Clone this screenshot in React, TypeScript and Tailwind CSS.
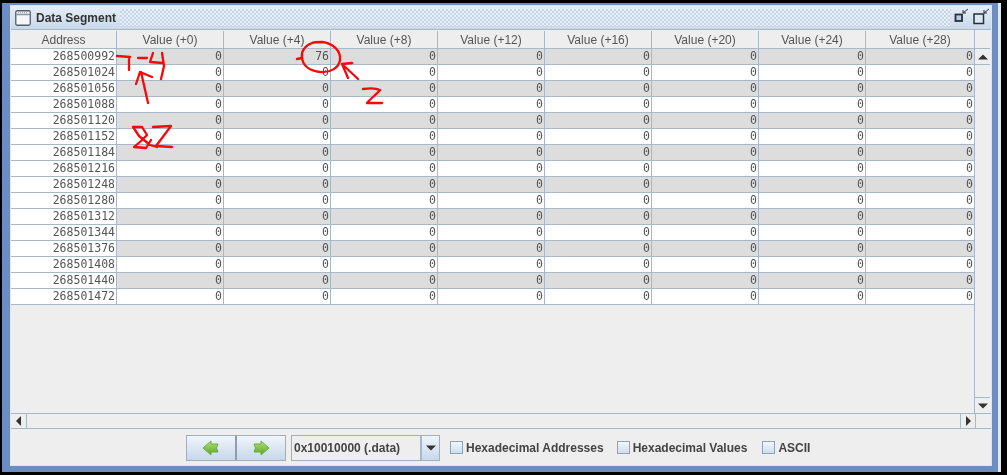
import React from 'react';

const ADDRESSES = [
	268500992, 268501024, 268501056, 268501088, 268501120, 268501152, 268501184, 268501216,
	268501248, 268501280, 268501312, 268501344, 268501376, 268501408, 268501440, 268501472,
];
const OFFSETS = [0, 4, 8, 12, 16, 20, 24, 28];
const COLS = 'grid grid-cols-[106px_repeat(7,107px)_108px]';

const ArrowIcon = ({ flip }: { flip?: boolean }) => (
	<svg width="18" height="16" viewBox="0 0 18 16" className={flip ? '-scale-x-100' : ''}>
		<defs>
			<linearGradient id="arrowFill" x1="0" y1="0" x2="0" y2="1">
				<stop offset="0" stopColor="#b4e07a" />
				<stop offset="1" stopColor="#5aa524" />
			</linearGradient>
		</defs>
		<path d="M1 8 L9 1 V4 H16 L14.5 8 L16 12 H9 V15 Z" fill="url(#arrowFill)" stroke="#6fae3c" strokeWidth="1" strokeLinejoin="round" />
	</svg>
);

const Triangle = ({ dir }: { dir: 'up' | 'down' | 'left' | 'right' }) => {
	const points = {
		up: '0,6 10,6 5,1',
		down: '0,1 10,1 5,6',
		left: '7,0 7,10 2,5',
		right: '3,0 3,10 8,5',
	}[dir];
	return (
		<svg width="10" height="10" viewBox={dir === 'up' || dir === 'down' ? '0 -1 10 9' : '0 0 10 10'}>
			<polygon points={points} fill="#333" />
		</svg>
	);
};

const ScrollButton = ({ dir, className }: { dir: 'up' | 'down' | 'left' | 'right'; className: string }) => (
	<div className={`flex shrink-0 items-center justify-center border-[#a8b8c6] bg-[#eeeeee] ${className}`}>
		<Triangle dir={dir} />
	</div>
);

const Checkbox = ({ label, className }: { label: string; className: string }) => (
	<div className={`flex items-center gap-[3px] ${className}`}>
		<div className="h-[13px] w-[13px] border border-[#8fa3b8] bg-gradient-to-b from-[#f2f6fa] to-[#cfdeed]" />
		<span className="text-[12px] font-bold text-[#444]">{label}</span>
	</div>
);

const Scribbles = () => (
	<svg
		className="pointer-events-none absolute top-0 left-0"
		width="1007"
		height="475"
		fill="none"
		stroke="#f80808"
		strokeWidth="2.3"
		strokeLinecap="round"
		strokeLinejoin="round"
	>
		<path d="M117 56 L130 57 M129 57 L129 70 M138 58 L147 58" />
		<path d="M153 53 L150 62 L163 63 M162 53 L164 66 L161 79" />
		<path d="M148 103 L141 72 M136 84 L140 72 L152 77" />
		<path d="M133 127 L142 127 L147 135 L141 141 L134 147 L146 148 L151 140 M133 127 L139 136 L150 145 L157 147" />
		<path d="M153 127 L171 126 L156 146 L172 147" />
		<path d="M312 43 C304 46 301 52 302 58 C303 66 310 71 320 72 C330 73 339 68 340 60 C341 50 332 43 322 42 C318 42 314 42 312 43" />
		<path d="M297 59 L302 58" />
		<path d="M342 64 L358 79 M342 64 L352 63 M342 64 L348 78" />
		<path d="M363 89 C370 88 376 88 380 90 C376 95 370 99 367 103 L382 103" />
	</svg>
);

export default function App() {
	return (
		<div className="relative flex h-[475px] w-[1007px] bg-black pt-[3px] pr-[6px] pb-[3px] pl-[2px] font-['Liberation_Sans',Arial,sans-serif] blur-[0.45px]">
			<div className="flex flex-1 flex-col border-r-[3px] border-[#e4e8ee] bg-[#6c8cc4] pt-[2px] pr-[6px] pb-[6px] pl-[8px]">
				<div className="flex flex-1 flex-col border border-[#dfe6ee] bg-[#eeeeee]">
					{/* title bar */}
					<div className="flex h-[23px] shrink-0 items-center bg-gradient-to-b from-[#e6eef7] to-[#c9d9ea] pr-[1px] pl-[4px]">
						<svg width="16" height="16" viewBox="0 0 16 16" className="shrink-0">
							<rect x="0.75" y="0.75" width="14.5" height="14.5" rx="1.5" fill="#f4f6f8" stroke="#55606c" strokeWidth="1.3" />
							<path d="M1 4.5 H15" stroke="#8a97a5" strokeWidth="1.5" />
							<path d="M3 2.7 H13" stroke="#8a97a5" strokeWidth="1" strokeDasharray="1 1" />
						</svg>
						<span className="ml-[5px] text-[12px] font-bold text-[#333]">Data Segment</span>
						<div className="mr-[3px] ml-[4px] h-[17px] flex-1 bg-[repeating-conic-gradient(#c3d4e6_0%_25%,#e9f0f7_0%_50%)] bg-[length:4px_4px]" />
						<svg width="36" height="20" viewBox="0 0 36 20" className="shrink-0">
							<rect x="1.5" y="6.5" width="6.5" height="6.5" fill="#b9cde2" stroke="#25303c" strokeWidth="1.8" />
							<path d="M9 5 L14 1 M9 5 H12 M9 5 V2" stroke="#25303c" strokeWidth="1" fill="none" />
							<rect x="20" y="6" width="9.5" height="9.5" fill="#dce7f2" stroke="#25303c" strokeWidth="1.5" />
							<path d="M30 5 L35 1 M30 5 H33 M30 5 V2" stroke="#25303c" strokeWidth="1" fill="none" />
						</svg>
					</div>

					{/* table and scrollbars */}
					<div className="flex flex-1 flex-col border-t border-b border-[#a8b8c6]">
						<div className="flex flex-1">
							<div className="w-[964px] shrink-0 border-r border-[#a8b8c6]">
								<div className={`${COLS} h-[19px] border-b border-[#a8b8c6] pt-[1px] text-[12px] text-[#555]`}>
									<div className="flex items-center justify-center border-r border-[#a8b8c6]">Address</div>
									{OFFSETS.map((o, i) => (
										<div key={o} className={`flex items-center justify-center ${i < 7 ? 'border-r border-[#a8b8c6]' : ''}`}>
											Value (+{o})
										</div>
									))}
								</div>
								{ADDRESSES.map((addr, r) => (
									<div
										key={addr}
										className={`${COLS} h-[16px] border-b border-[#a8b8c6] font-['DejaVu_Sans_Mono',monospace] text-[11.5px] leading-[15px] text-[#555]`}
									>
										<div className="border-r border-[#a8b8c6] bg-white pr-[1px] text-right">{addr}</div>
										{OFFSETS.map((o, c) => (
											<div
												key={o}
												className={`pr-[1px] text-right ${r % 2 === 0 ? 'bg-[#dddddd]' : 'bg-white'} ${c < 7 ? 'border-r border-[#a8b8c6]' : ''}`}
											>
												{r === 0 && o === 4 ? 76 : 0}
											</div>
										))}
									</div>
								))}
							</div>
							<div className="flex w-[15px] flex-col">
								<div className="h-[19px] shrink-0 border-b border-[#a8b8c6]" />
								<ScrollButton dir="up" className="h-[16px] border-b" />
								<div className="flex-1" />
								<ScrollButton dir="down" className="h-[16px] border-t" />
							</div>
						</div>
						<div className="flex h-[15px] shrink-0 border-t border-[#a8b8c6]">
							<ScrollButton dir="left" className="w-[16px] border-r" />
							<div className="flex-1" />
							<ScrollButton dir="right" className="w-[16px] border-x" />
							<div className="w-[15px] shrink-0" />
						</div>
					</div>

					{/* bottom controls */}
					<div className="flex h-[36px] shrink-0 items-center pt-[1px] pl-[175px]">
						<div className="flex h-[26px] w-[100px] border border-[#9fb0c0]">
							<div className="flex flex-1 items-center justify-center border-r-2 border-[#8d9dae] bg-gradient-to-b from-[#f0f5fa] to-[#c6d8ea]">
								<ArrowIcon />
							</div>
							<div className="flex flex-1 items-center justify-center bg-gradient-to-b from-[#f0f5fa] to-[#c6d8ea]">
								<ArrowIcon flip />
							</div>
						</div>
						<div className="ml-[5px] flex h-[26px] w-[149px] border border-[#9fb0c0] bg-[#eeeeee]">
							<div className="flex flex-1 items-center pl-[2px] text-[12px] font-bold text-[#444]">0x10010000 (.data)</div>
							<div className="flex w-[19px] items-center justify-center border-l-2 border-[#a8b8c8] bg-gradient-to-b from-[#eff4f9] to-[#c6d8ea]">
								<Triangle dir="down" />
							</div>
						</div>
						<Checkbox label="Hexadecimal Addresses" className="ml-[10px]" />
						<Checkbox label="Hexadecimal Values" className="ml-[13px]" />
						<Checkbox label="ASCII" className="ml-[15px]" />
					</div>
				</div>
			</div>
			<Scribbles />
		</div>
	);
}
